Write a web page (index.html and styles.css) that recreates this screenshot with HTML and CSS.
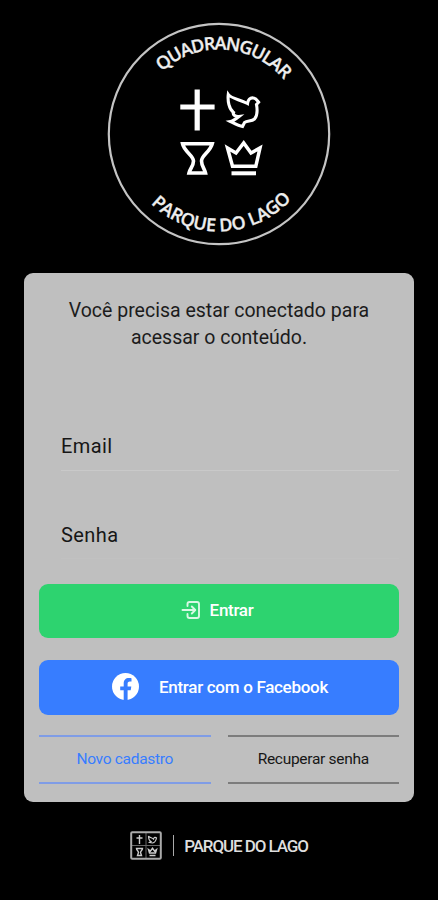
FILE: index.html
```html
<!DOCTYPE html>
<html lang="pt-BR">
<head>
<meta charset="utf-8">
<meta name="viewport" content="width=device-width, initial-scale=1">
<title>Parque do Lago</title>
<link rel="stylesheet" href="styles.css">
</head>
<body>
<svg width="0" height="0" class="defs">
  <defs>
    <symbol id="emblem" viewBox="178 86 86 94">
      <g fill="none" stroke="currentColor" stroke-linejoin="miter">
        <path d="M197.200 89.500V130.500M180.300 107H214.600" stroke-width="5.200"/>
        <path d="M228.300 94.500C231 98.500 240 99.500 247.500 103.500C248 99.500 250 97.500 253.500 98C256 98.300 257 100 258.600 102.200L256.500 104.500C257.500 110 257.500 115.500 254.500 119C251.500 121.500 247.500 120.500 244.500 122.500L242.500 126.500C239 126 234.500 123.500 230.500 121.500C233.500 121 236.500 118.500 239 116.500C235.500 117 232.500 114.500 233.500 112.500C229 109 227.500 101 228.300 94.500Z" stroke-width="3.100"/>
        <path d="M182.500 143.700H212.300C210.500 151.500 201.500 155.500 201.500 161C201.500 166 204.500 168.500 205.500 173H189C190 168.500 193.500 166 193.500 161C193.500 155.500 184 151.500 182.500 143.700Z" stroke-width="3.600"/>
        <path d="M227.500 148L236 153L243.700 143L251 153L260 148L255.800 166.300H232.500Z" stroke-width="3.500"/>
        <path d="M231.500 173.300H256" stroke-width="4"/>
      </g>
    </symbol>
  </defs>
</svg>
<main class="page">
  <svg class="logo" viewBox="107 22 224 224" role="img" aria-label="Quadrangular Parque do Lago">
    <defs>
      <path id="arcTop" d="M134.500 134A84.500 84.500 0 0 1 303.500 134"/>
      <path id="arcBottom" d="M121.500 134A97.500 97.500 0 0 0 316.500 134"/>
    </defs>
    <circle cx="219" cy="134" r="110.200" fill="none" stroke="#c4c4c4" stroke-width="2.200"/>
    <text class="arc-text"><textPath href="#arcTop" startOffset="70" textLength="136.500">QUADRANGULAR</textPath></text>
    <text class="arc-text"><textPath href="#arcBottom" startOffset="77.500" textLength="157">PARQUE DO LAGO</textPath></text>
    <use href="#emblem" x="178" y="86" width="86" height="94"/>
  </svg>

  <section class="card">
    <p class="intro">Você precisa estar conectado para<br>acessar o conteúdo.</p>
    <div class="field">Email</div>
    <div class="field field-last">Senha</div>
    <button class="btn btn-enter">
      <svg width="20" height="20" viewBox="0 0 20 20" fill="none" stroke="#d8f8e4" stroke-width="1.900" stroke-linecap="round" stroke-linejoin="round"><path d="M6.500 6V4Q6.500 2 8.500 2H16Q18 2 18 4V16Q18 18 16 18H8.500Q6.500 18 6.500 16V14M1.500 10H14M10.800 6.500L14.300 10L10.800 13.500"/></svg>
      <span>Entrar</span>
    </button>
    <button class="btn btn-facebook">
      <svg width="27" height="27" viewBox="0 0 27 27"><circle cx="13.500" cy="13.500" r="13.500" fill="#fff"/><path d="M11.700 27V17.300H8.200V13.400H11.700V10.500C11.700 7 13.700 5.100 16.800 5.100C18.200 5.100 19.500 5.300 19.500 5.300V8.600H17.800C16.100 8.600 15.600 9.600 15.600 10.700V13.400H19.300L18.700 17.300H15.600V27Z" fill="#377dff"/></svg>
      <span>Entrar com o Facebook</span>
    </button>
    <div class="links">
      <a class="link link-new">Novo cadastro</a>
      <a class="link">Recuperar senha</a>
    </div>
  </section>

  <footer class="footer">
    <svg width="32" height="29" viewBox="0 0 32 29">
      <path d="M16 1V28M1 14.500H31" stroke="#666" stroke-width="1"/>
      <rect x="1.200" y="1.200" width="29.600" height="26.600" rx="1" fill="none" stroke="#aaa" stroke-width="2"/>
      <g fill="none" stroke="#ccc" stroke-width="1.400">
        <path d="M9.500 4V13M6.500 7H12.500"/>
        <path d="M18.500 5C19.500 7 22 6.500 23.500 8C24 6 25.500 6 26.500 7C26 9.500 25.500 11.500 22.500 12L19.500 11.500L21 10.500C19 9.500 18.500 7.500 18.500 5Z" stroke-width="1.200"/>
        <path d="M6.500 17.500H12.500C12.500 19.500 10.500 20 10.500 21.500L11.500 24.500H7.500L8.500 21.500C8.500 20 6.500 19.500 6.500 17.500Z"/>
        <path d="M18.500 18.500L20.500 20L22.500 17.300L24.500 20L26.500 18.500L25.500 22H19.500ZM19.500 24.500H25.500"/>
      </g>
    </svg>
    <span class="divider"></span>
    <span class="brand">PARQUE DO LAGO</span>
  </footer>
</main>
</body>
</html>
```
FILE: styles.css
```css
* { box-sizing: border-box; }

body {
  margin: 0;
  background: #000;
  font-family: Roboto, "Liberation Sans", sans-serif;
}

.defs { display: block; }

.page {
  width: 438px;
  height: 900px;
  padding: 22px 24px 0;
  display: flex;
  flex-direction: column;
  align-items: center;
  overflow: hidden;
}

.logo {
  width: 224px;
  height: 224px;
  color: #fff;
  flex: none;
}

.arc-text {
  font: 600 18px "Open Sans", sans-serif;
  fill: #eee;
  stroke: #eee;
  stroke-width: 0.300px;
}

.card {
  width: 390px;
  height: 529px;
  margin-top: 27px;
  padding: 24px 15px 0;
  border-radius: 9px;
  background: #bfbfbf;
  flex: none;
}

.intro {
  margin: 0 0 63px;
  text-align: center;
  font-size: 19.500px;
  line-height: 27px;
  color: #1c1c1c;
}

.field {
  height: 57px;
  margin-left: 22px;
  padding-top: 19px;
  border-bottom: 1px solid #c9c9c9;
  font-size: 20px;
  line-height: 27px;
  letter-spacing: 0.400px;
  color: #161616;
}

.field-last {
  height: 56px;
  margin-top: 32px;
  border-bottom-color: #c1c1c1;
}

.btn {
  width: 100%;
  height: 54px;
  margin: 0;
  padding: 0 0 1px;
  border: 0;
  border-radius: 9px;
  display: flex;
  align-items: center;
  justify-content: center;
  font: 500 17px/24px Roboto, sans-serif;
  color: #fff;
}

.btn-enter {
  margin-top: 24.500px;
  gap: 9px;
  padding-right: 4px;
  background: #2dd36f;
  letter-spacing: -0.300px;
}

.btn-facebook {
  height: 55px;
  margin-top: 22px;
  gap: 20px;
  padding-left: 2px;
  background: #377dff;
  letter-spacing: -0.300px;
}

.links {
  margin-top: 20.500px;
  display: grid;
  grid-template-columns: 1fr 1fr;
  gap: 17px;
}

.link {
  height: 49px;
  border-top: 2px solid #7c7c7c;
  border-bottom: 2px solid #7c7c7c;
  text-align: center;
  font-size: 15.500px;
  line-height: 44px;
  letter-spacing: -0.300px;
  color: #161616;
}

.link-new {
  border-color: #7f9ce6;
  color: #377dff;
}

.footer {
  margin-top: 29px;
  display: flex;
  align-items: center;
  color: #dedede;
}

.divider {
  width: 1px;
  height: 21px;
  margin: 0 10px 0 11px;
  background: #aaa;
}

.brand {
  font-size: 17px;
  line-height: 24px;
  letter-spacing: -1.100px;
  font-weight: 500;
}
```
